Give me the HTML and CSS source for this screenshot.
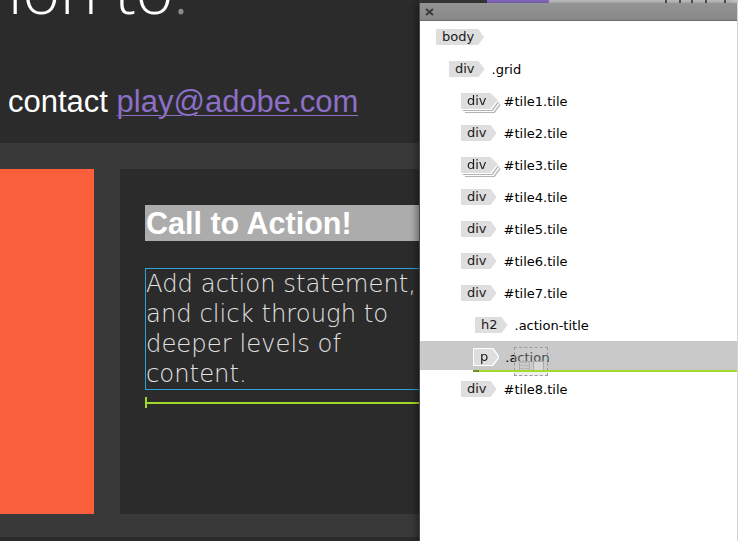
FILE: index.html
```html
<!DOCTYPE html>
<html lang="en">
<head>
<meta charset="utf-8">
<title>Tiles</title>
<link rel="stylesheet" href="styles.css">
</head>
<body>
<div class="page">
  <header class="intro">
    <h1 class="hero">ion to<span class="dot">.</span></h1>
    <p class="contact">contact <a href="#">play@adobe.com</a></p>
  </header>
  <section class="band">
    <div class="grid">
      <div class="tile tile-orange"></div>
      <div class="tile tile-dark">
        <h2 class="action-title">Call to Action!</h2>
        <p class="action">Add action statement, and click through to deeper levels of content.</p>
        <div class="drop-line"></div>
      </div>
    </div>
  </section>
</div>

<div class="backdrop-strip"></div>

<aside class="dom-panel">
  <div class="titlebar">
    <svg class="close" width="9" height="8" viewBox="0 0 9 8"><path d="M1 1 L8 7 M8 1 L1 7" stroke="#3c3c3c" stroke-width="2"/></svg>
  </div>
  <ul class="tree">
    <li class="node lvl0"><span class="tag">body</span></li>
    <li class="node lvl1"><span class="tag">div</span><span class="label">.grid</span></li>
    <li class="node lvl2"><span class="stack"><span class="tag">div</span></span><span class="label">#tile1.tile</span></li>
    <li class="node lvl2"><span class="tag">div</span><span class="label">#tile2.tile</span></li>
    <li class="node lvl2"><span class="stack"><span class="tag">div</span></span><span class="label">#tile3.tile</span></li>
    <li class="node lvl2"><span class="tag">div</span><span class="label">#tile4.tile</span></li>
    <li class="node lvl2"><span class="tag">div</span><span class="label">#tile5.tile</span></li>
    <li class="node lvl2"><span class="tag">div</span><span class="label">#tile6.tile</span></li>
    <li class="node lvl2"><span class="tag">div</span><span class="label">#tile7.tile</span></li>
    <li class="node lvl3"><span class="tag">h2</span><span class="label">.action-title</span></li>
    <li class="node lvl3p selected"><span class="outline"><span class="tag">p</span></span><span class="label label-tight">.action</span>
      <span class="ghost"><span class="ghost-doc"></span><span class="ghost-img"></span></span>
    </li>
    <li class="node lvl2"><span class="tag">div</span><span class="label">#tile8.tile</span></li>
  </ul>
</aside>
</body>
</html>
```
FILE: styles.css
```css
html, body {
  margin: 0;
  padding: 0;
}

body {
  width: 738px;
  height: 541px;
  overflow: hidden;
  position: relative;
  background: #2b2b2b;
}

.page {
  width: 738px;
}

.intro {
  padding: 0 0 0 8px;
}

.hero {
  margin: -42px 0 0;
  font: 300 64px/64px "Open Sans", sans-serif;
  color: #ffffff;
  white-space: nowrap;
}

.hero .dot {
  color: #8a8a8a;
}

.contact {
  margin: 62px 0 0;
  font: 31px/36px "Liberation Sans", Arial, sans-serif;
  color: #ffffff;
}

.contact a {
  color: #8c70c8;
  text-decoration: underline;
  text-underline-offset: 3px;
  text-decoration-thickness: 1px;
}

.band {
  margin-top: 23px;
  background: #393939;
  padding: 26px 0 23px;
}

.grid {
  display: grid;
  grid-template-columns: 94px 330px;
  column-gap: 26px;
  height: 345px;
}

.tile-orange {
  background: #f95f3b;
}

.tile-dark {
  background: #2b2b2b;
  padding: 36px 0 0 25px;
}

.action-title {
  margin: 0;
  height: 36px;
  width: 300px;
  padding-left: 1px;
  background: #acacac;
  color: #ffffff;
  font: bold 30.5px/37px "Liberation Sans", Arial, sans-serif;
  white-space: nowrap;
}

.action {
  margin: 27px 0 0;
  width: 290px;
  height: 120px;
  border: 1px solid #2ea3d6;
  font: 200 24.3px/30px "DejaVu Sans", sans-serif;
  color: #e2e2e2;
}

.drop-line {
  margin-top: 7px;
  width: 300px;
  height: 11px;
  border-left: 2px solid #a2d82a;
  background: linear-gradient(#a2d82a, #a2d82a) left center / 100% 2px no-repeat;
}

.backdrop-strip {
  position: absolute;
  left: 419px;
  top: 0;
  width: 319px;
  height: 3px;
  background:
    linear-gradient(to right,
      #3a3a3a 0 68px,
      #8a6fc6 68px 130px,
      #c6c6c6 130px 246px,
      #555 246px 248px,
      #c6c6c6 248px 260px,
      #555 260px 262px,
      #c6c6c6 262px 272px,
      #555 272px 274px,
      #c6c6c6 274px 286px,
      #555 286px 288px,
      #c6c6c6 288px 305px,
      #555 305px 307px,
      #c6c6c6 307px);
}

.dom-panel {
  position: absolute;
  left: 419px;
  top: 3px;
  width: 317px;
  bottom: 0;
  background: #ffffff;
  border-left: 1px solid #4a4a4a;
  border-right: 1px solid #d4d4d4;
  box-shadow: -3px 0 6px rgba(0, 0, 0, 0.35);
}

.titlebar {
  height: 17px;
  background: linear-gradient(#949494, #878787);
  border-bottom: 1px solid #6c6c6c;
  display: flex;
  align-items: center;
  padding-left: 5px;
}

.close {
  display: block;
  margin-top: 1px;
}

.tree {
  list-style: none;
  margin: 0;
  padding: 0;
}

.node {
  height: 32px;
  display: flex;
  align-items: center;
  position: relative;
  font-family: "DejaVu Sans", sans-serif;
}

.lvl0 { padding-left: 16px; }
.lvl1 { padding-left: 29px; }
.lvl2 { padding-left: 41px; }
.lvl3 { padding-left: 55px; }
.lvl3p { padding-left: 54px; }

.tag {
  display: inline-block;
  height: 16px;
  line-height: 15px;
  padding: 0 10px 0 6px;
  background: #dedede;
  color: #1a1a1a;
  font-size: 13px;
  clip-path: polygon(0 0, calc(100% - 6px) 0, 100% 50%, calc(100% - 6px) 100%, 0 100%);
}

.stack {
  display: inline-block;
  line-height: 0;
  filter:
    drop-shadow(1px 1px 0 #ffffff)
    drop-shadow(1px 1px 0 #b4b4b4)
    drop-shadow(1px 1px 0 #ffffff)
    drop-shadow(1px 1px 0 #b4b4b4);
}

.stack .tag {
  line-height: 15px;
  vertical-align: top;
}

.outline {
  display: inline-block;
  line-height: 0;
  filter:
    drop-shadow(1px 0 0 #ffffff)
    drop-shadow(-1px 0 0 #ffffff)
    drop-shadow(0 1px 0 #ffffff)
    drop-shadow(0 -1px 0 #ffffff);
}

.outline .tag {
  line-height: 15px;
  vertical-align: top;
  padding: 0 10px 0 6px;
}

.label {
  margin-left: 7px;
  font-size: 13px;
  color: #000000;
}

.label-tight {
  margin-left: 7px;
}

.selected {
  background: linear-gradient(#c9c9c9, #c9c9c9) top / 100% 29px no-repeat;
}

.selected::after {
  content: "";
  position: absolute;
  left: 53px;
  right: 0;
  top: 29px;
  height: 2px;
  background: linear-gradient(to right, #6f8f2a 0 6px, #a3dc2a 6px);
}

.ghost {
  position: absolute;
  left: 94px;
  top: 6px;
  width: 34px;
  height: 29px;
  border: 1px dashed #9a9a9a;
  background: rgba(210, 210, 210, 0.35);
  display: flex;
  align-items: flex-end;
  justify-content: center;
  gap: 3px;
  padding-bottom: 3px;
  box-sizing: border-box;
}

.ghost-doc {
  width: 9px;
  height: 9px;
  border: 1px solid #b0b0b0;
  background: repeating-linear-gradient(#b8b8b8 0 1px, transparent 1px 3px);
}

.ghost-img {
  width: 9px;
  height: 9px;
  border: 1px solid #a8a8a8;
  background: #d8d8d8;
}
```
